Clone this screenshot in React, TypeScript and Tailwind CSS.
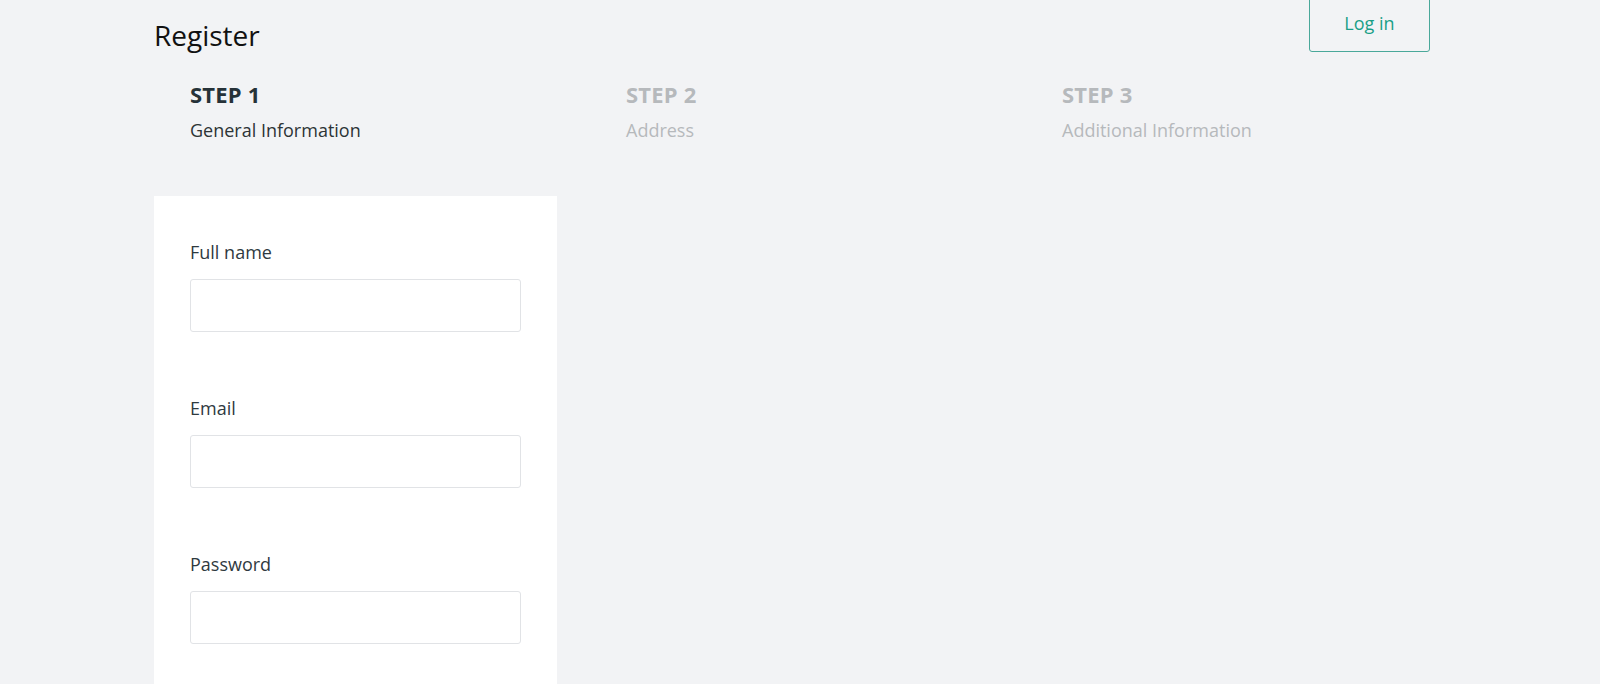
export default function App() {
  const steps = [
    { title: "STEP 1", label: "General Information", active: true },
    { title: "STEP 2", label: "Address", active: false },
    { title: "STEP 3", label: "Additional Information", active: false },
  ];
  const fields = ["Full name", "Email", "Password"];

  return (
    <div className="min-h-screen overflow-hidden bg-[#f2f3f5] font-['Open_Sans','Noto_Sans',sans-serif]">
      <div className="ml-[154px] w-[1276px]">
        <header className="flex items-start justify-between">
          <h1 className="mt-[17px] text-[28px] leading-[36px] text-[#111111]">Register</h1>
          <button className="-mt-[5px] h-[57px] w-[121px] rounded-[3px] border border-[#4aa89a] text-[18px] text-[#1a9f87]">
            Log in
          </button>
        </header>

        <div className="mt-[27px] flex pl-[36px]">
          {steps.map((step) => (
            <div key={step.title} className="w-[436px] shrink-0">
              <div
                className={
                  step.active
                    ? "text-[22px] font-bold leading-[28px] tracking-[0.2px] text-[#263238]"
                    : "text-[22px] font-bold leading-[28px] tracking-[0.2px] text-[#b6b9bc]"
                }
              >
                {step.title}
              </div>
              <div
                className={
                  step.active
                    ? "mt-[10px] text-[18px] leading-[25px] text-[#2d3436]"
                    : "mt-[10px] text-[18px] leading-[25px] text-[#b6b9bc]"
                }
              >
                {step.label}
              </div>
            </div>
          ))}
        </div>

        <form className="mt-[53px] w-[403px] bg-white px-[36px] pt-[44px] pb-[60px]">
          {fields.map((field, i) => (
            <div key={field} className={i > 0 ? "mt-[64px]" : ""}>
              <label className="block text-[18px] leading-[25px] text-[#2f3a3f]">{field}</label>
              <input
                type={field === "Password" ? "password" : "text"}
                className="mt-[14px] block h-[53px] w-[331px] rounded-[3px] border border-[#e1e3e6] bg-white px-3 outline-none"
              />
            </div>
          ))}
        </form>
      </div>
    </div>
  );
}
